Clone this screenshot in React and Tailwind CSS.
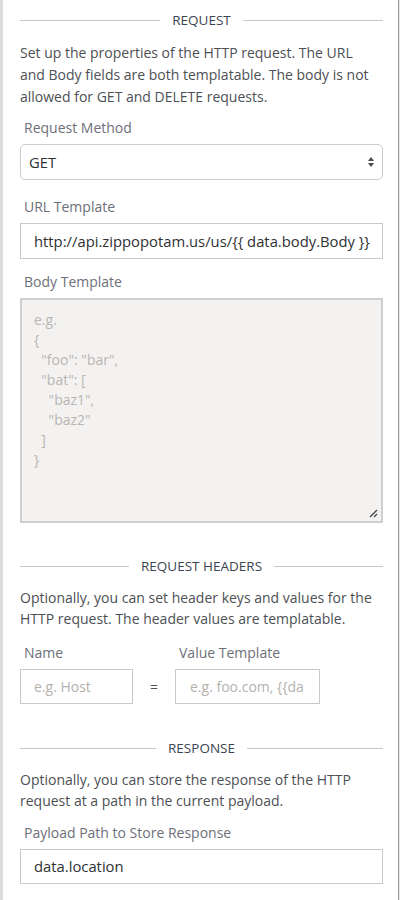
import React from "react";

function SectionHeader({ title }) {
  return (
    <div className="flex items-center gap-3">
      <div className="h-px flex-1 bg-[#c8c8c8]" />
      <div className="text-[13.5px] leading-[20px] text-[#3c4553]">{title}</div>
      <div className="h-px flex-1 bg-[#c8c8c8]" />
    </div>
  );
}

export default function App() {
  return (
    <div
      className="flex min-h-[900px] w-[400px] bg-white"
      style={{ fontFamily: '"Open Sans", "Liberation Sans", sans-serif' }}
    >
      <div className="w-[3px] shrink-0 bg-[#dcdcdc]" />
      <div className="flex-1 pl-[17px] pr-[15px] pt-[10px]">
        <SectionHeader title="REQUEST" />
        <p className="mt-[12px] pr-[6px] text-[14px] leading-[22px] text-[#4d5054]">
          Set up the properties of the HTTP request. The URL and Body fields are both templatable. The body is not allowed for GET and DELETE requests.
        </p>

        <div className="mt-[10px] pl-[4px] text-[14px] leading-[20px] text-[#6d7079]">Request Method</div>
        <div className="mt-[6px] flex h-[36px] items-center justify-between rounded-[5px] border border-[#cccccc] pl-[8px] pr-[7px]">
          <span className="text-[14.8px] text-[#2f3133]">GET</span>
          <svg width="8" height="14" viewBox="0 0 8 14">
            <path d="M4 2 L7 6 L1 6 Z" fill="#4a4a4a" />
            <path d="M4 12 L7 8 L1 8 Z" fill="#4a4a4a" />
          </svg>
        </div>

        <div className="mt-[17px] pl-[4px] text-[14px] leading-[20px] text-[#6d7079]">URL Template</div>
        <div className="mt-[6px] flex h-[36px] items-center overflow-hidden border border-[#c9c9c9] pl-[13px] pr-[4px]">
          <span className="whitespace-nowrap text-[14.8px] text-[#2f3133]">http://api.zippopotam.us/us/{"{{ data.body.Body }}"}</span>
        </div>

        <div className="mt-[13px] pl-[4px] text-[14px] leading-[20px] text-[#6d7079]">Body Template</div>
        <div className="relative mt-[6px] h-[225px] border-2 border-[#cfcfcf] bg-[#f3f2f1] pl-[12px] pt-[10px]">
          <pre
            className="text-[14px] leading-[20px] text-[#b9b6b3]"
            style={{ fontFamily: '"Open Sans", "Liberation Sans", sans-serif' }}
          >
{`e.g.
{
  "foo": "bar",
  "bat": [
    "baz1",
    "baz2"
  ]
}`}
          </pre>
          <svg className="absolute bottom-[3px] right-[3px]" width="10" height="10" viewBox="0 0 10 10">
            <path d="M9 2 L2 9 M9 6 L6 9" stroke="#444" strokeWidth="1.3" />
          </svg>
        </div>

        <div className="mt-[33px]">
          <SectionHeader title="REQUEST HEADERS" />
        </div>
        <p className="mt-[11px] text-[14px] leading-[21px] text-[#4d5054]">
          Optionally, you can set header keys and values for the HTTP request. The header values are templatable.
        </p>

        <div className="mt-[14px] flex items-end">
          <div className="w-[113px]">
            <div className="pl-[4px] text-[14px] leading-[20px] text-[#6d7079]">Name</div>
            <div className="mt-[6px] flex h-[35px] items-center border border-[#c9c9c9] pl-[13px]">
              <span className="text-[14px] text-[#b3b1ae]">e.g. Host</span>
            </div>
          </div>
          <div className="flex h-[35px] w-[42px] items-center justify-center text-[14px] text-[#555]">=</div>
          <div className="w-[145px]">
            <div className="pl-[4px] text-[14px] leading-[20px] text-[#6d7079]">Value Template</div>
            <div className="mt-[6px] flex h-[35px] items-center overflow-hidden border border-[#c9c9c9] pl-[14px]">
              <span className="whitespace-nowrap text-[14px] text-[#b3b1ae]">e.g. foo.com, {"{{da"}</span>
            </div>
          </div>
        </div>

        <div className="mt-[34px]">
          <SectionHeader title="RESPONSE" />
        </div>
        <p className="mt-[11px] text-[14px] leading-[21px] text-[#4d5054]">
          Optionally, you can store the response of the HTTP request at a path in the current payload.
        </p>
        <div className="mt-[12px] pl-[4px] text-[14px] leading-[20px] text-[#6d7079]">Payload Path to Store Response</div>
        <div className="mt-[6px] flex h-[35px] items-center border border-[#c9c9c9] pl-[13px]">
          <span className="text-[14.8px] text-[#2f3133]">data.location</span>
        </div>
      </div>
      <div className="w-px shrink-0 bg-[#9a9a9a]" />
      <div className="w-px shrink-0 bg-[#e8e8e8]" />
    </div>
  );
}
